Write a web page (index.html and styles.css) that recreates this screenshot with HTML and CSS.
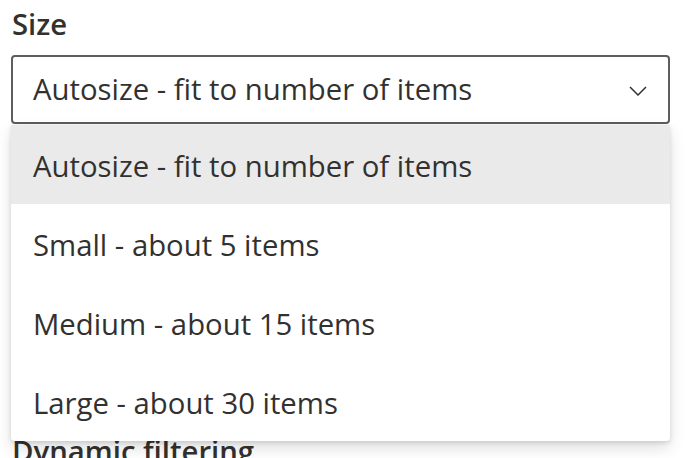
FILE: index.html
```html
<!DOCTYPE html>
<html lang="en">
<head>
<meta charset="utf-8">
<title>Size dropdown</title>
<link rel="stylesheet" href="styles.css">
</head>
<body>
<div class="panel">
  <div class="field">
    <label class="label">Size</label>
    <div class="dropdown">
      <div class="dropdown-title">
        <span class="dropdown-text">Autosize - fit to number of items</span>
        <svg class="chevron" width="18" height="10" viewBox="0 0 18 10" aria-hidden="true">
          <path d="M1 1 L9 9 L17 1" fill="none" stroke="#323130" stroke-width="1.5"/>
        </svg>
      </div>
      <ul class="menu">
        <li class="option selected">Autosize - fit to number of items</li>
        <li class="option">Small - about 5 items</li>
        <li class="option">Medium - about 15 items</li>
        <li class="option">Large - about 30 items</li>
      </ul>
    </div>
  </div>
  <div class="field next">
    <label class="label">Dynamic filtering</label>
  </div>
</div>
</body>
</html>
```
FILE: styles.css
```css
html, body {
  margin: 0;
  padding: 0;
  background: #ffffff;
}
body {
  font-family: "Open Sans", "Noto Sans", sans-serif;
  font-size: 29.3px;
  color: #323130;
  overflow: hidden;
}
.panel {
  padding: 4px 0 0 11px;
  width: 659px;
}
.label {
  display: block;
  font-weight: 600;
  line-height: 40px;
  height: 40px;
  padding-left: 1px;
}
.dropdown {
  position: relative;
  margin-top: 11px;
}
.dropdown-title {
  display: flex;
  align-items: center;
  justify-content: space-between;
  height: 65px;
  border: 2px solid #605e5c;
  border-radius: 4px;
  padding: 0 21px 0 20px;
  line-height: 67px;
}
.chevron {
  display: block;
  margin-top: 2px;
}
.menu {
  position: absolute;
  top: 70px;
  left: 0;
  right: 0;
  margin: 0;
  padding: 0;
  list-style: none;
  background: #ffffff;
  border-radius: 0 0 4px 4px;
  box-shadow: 0 7px 16px rgba(0, 0, 0, 0.13), 0 1.3px 4px rgba(0, 0, 0, 0.11);
  z-index: 2;
}
.option {
  height: 79px;
  line-height: 83px;
  padding-left: 22px;
}
.option.selected {
  background: #eaeaea;
}
.next {
  margin-top: 307px;
}
```
